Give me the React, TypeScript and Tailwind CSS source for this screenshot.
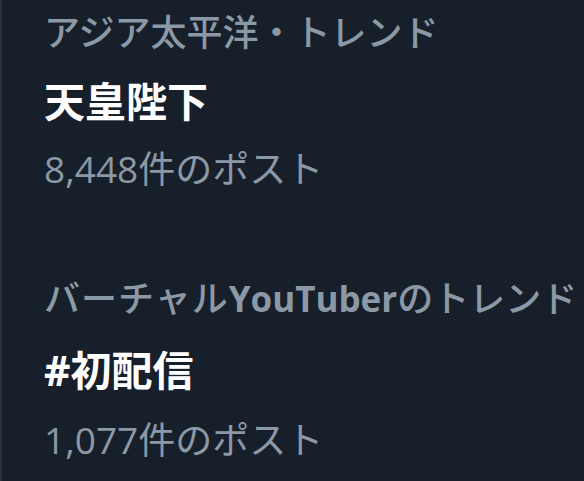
import React from "react";

function Trend({ category, title, count, first }: { category: React.ReactNode; title: React.ReactNode; count: React.ReactNode; first?: boolean }) {
  return (
    <div className={first ? "flex flex-col pt-[10px]" : "flex flex-col mt-[86px]"}>
      <div className="text-[36px] leading-[40px] text-[#8b98a5] font-medium whitespace-nowrap font-['Noto_Sans_CJK_JP',sans-serif]">{category}</div>
      <div className="mt-[25px] text-[41px] leading-[48px] text-white font-bold whitespace-nowrap font-['Noto_Sans_CJK_JP',sans-serif]">{title}</div>
      <div className="mt-[25px] text-[37px] leading-[42px] text-[#8b98a5] whitespace-nowrap font-['Open_Sans','Noto_Sans_CJK_JP',sans-serif]">{count}</div>
    </div>
  );
}

export default function App() {
  return (
    <div className="w-[584px] h-[481px] bg-[#171f2a] border-l-2 border-[#2b343e] overflow-hidden pl-[42px]">
      <Trend first category="アジア太平洋・トレンド" title="天皇陛下" count="8,448件のポスト" />
      <Trend
        category={
          <>
            <span className="tracking-[1px]">バーチャル</span>
            <span className="text-[35px] font-bold font-['Open_Sans',sans-serif]">YouTuber</span>
            <span>のトレンド</span>
          </>
        }
        title={
          <>
            <span className="font-['Open_Sans',sans-serif]">#</span>初配信
          </>
        }
        count="1,077件のポスト"
      />
    </div>
  );
}
